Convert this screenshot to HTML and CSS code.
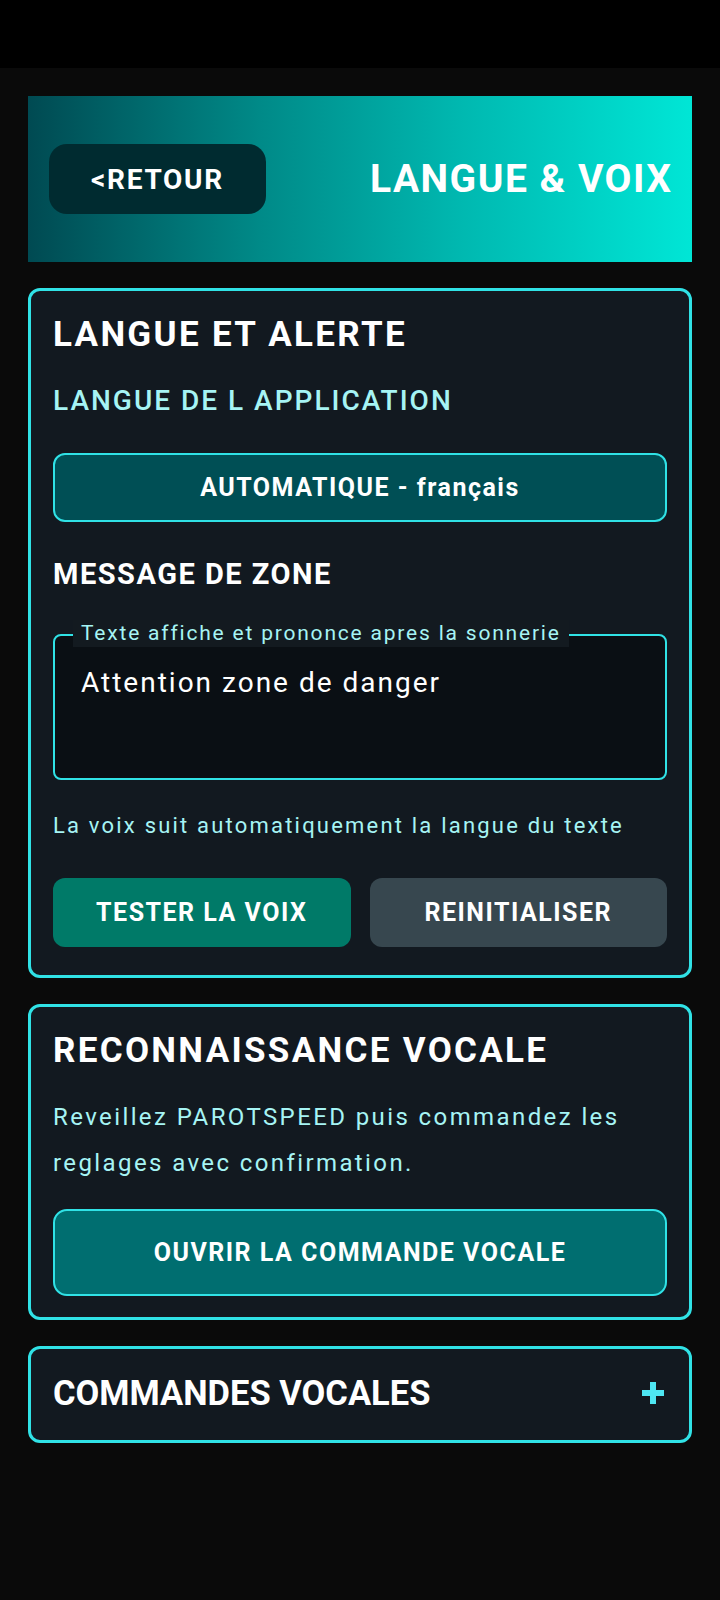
FILE: index.html
```html
<!DOCTYPE html>
<html lang="fr">
    <head>
        <meta charset="UTF-8">
        <title>Langue & Voix</title>
        <meta name="viewport" content="width=device-width, initial-scale=1.0">
        <link rel="stylesheet" href="styles.css">
    </head>
    <body>
        <div class="statusBar"></div>

        <div class="page">
            <div class="header">
                <button class="backBtn">&lt;RETOUR</button>
                <h1 class="headerTitle">LANGUE &amp; VOIX</h1>
            </div>

            <div class="card cardLang">
                <h2 class="cardTitle">LANGUE ET ALERTE</h2>
                <p class="subTitle">LANGUE DE L APPLICATION</p>
                <button class="selectBtn">AUTOMATIQUE - français</button>

                <h3 class="sectionTitle">MESSAGE DE ZONE</h3>
                <div class="field">
                    <span class="fieldLabel">Texte affiche et prononce apres la sonnerie</span>
                    <div class="fieldText">Attention zone de danger</div>
                </div>
                <p class="hint">La voix suit automatiquement la langue du texte</p>

                <div class="btnRow">
                    <button class="btn btnTest">TESTER LA VOIX</button>
                    <button class="btn btnReset">REINITIALISER</button>
                </div>
            </div>

            <div class="card cardVoice">
                <h2 class="cardTitle">RECONNAISSANCE VOCALE</h2>
                <p class="desc">Reveillez PAROTSPEED puis commandez les reglages avec confirmation.</p>
                <button class="openBtn">OUVRIR LA COMMANDE VOCALE</button>
            </div>

            <div class="card cardCmds">
                <h2 class="cardTitle cmdsTitle">COMMANDES VOCALES</h2>
                <svg class="plus" width="22" height="22" viewBox="0 0 22 22">
                    <rect x="8" y="0" width="6" height="22" fill="#4ee6f2"/>
                    <rect x="0" y="8" width="22" height="6" fill="#4ee6f2"/>
                </svg>
            </div>
        </div>
    </body>
</html>
```

FILE: styles.css
```css
body {
    margin: 0;
    padding: 0;
    background-color: #0a0a0a;
    font-family: Roboto, "Noto Sans", sans-serif;
    color: #fff;
}
button {
    font-family: inherit;
    cursor: pointer;
}
h1, h2, h3, p {
    margin: 0;
}
.statusBar {
    height: 68px;
    background-color: #000;
}
.page {
    display: flex;
    flex-direction: column;
    gap: 26px;
    padding: 28px 28px 0;
}

/* header */
.header {
    height: 166px;
    display: flex;
    align-items: center;
    justify-content: space-between;
    padding: 0 21px;
    background: linear-gradient(90deg, #004a52 0%, #008a88 35%, #00b8b0 65%, #00e6d6 100%);
}
.backBtn {
    width: 217px;
    height: 70px;
    border: none;
    border-radius: 18px;
    background-color: #002b30;
    color: #fff;
    font-size: 28px;
    font-weight: 700;
    letter-spacing: 1.7px;
}
.headerTitle {
    font-size: 39px;
    font-weight: 700;
    line-height: 44px;
    letter-spacing: 1.5px;
    margin-right: -1.5px;
}

/* cards */
.card {
    border: 3px solid #30e2e6;
    border-radius: 12px;
    background-color: #121920;
    padding: 24px 22px 28px;
}
.cardTitle {
    font-size: 35px;
    font-weight: 700;
    line-height: 40px;
    letter-spacing: 2.3px;
}
.subTitle {
    margin-top: 28px;
    color: #a6f4f4;
    font-size: 28px;
    font-weight: 500;
    line-height: 36px;
    letter-spacing: 2px;
}
.selectBtn {
    display: block;
    width: 100%;
    height: 69px;
    margin-top: 34px;
    border: 2px solid #30e2e6;
    border-radius: 12px;
    background-color: #004f55;
    color: #fff;
    font-size: 25px;
    font-weight: 700;
    letter-spacing: 1.5px;
}
.sectionTitle {
    margin-top: 33px;
    font-size: 29px;
    font-weight: 700;
    line-height: 38px;
    letter-spacing: 1.5px;
}
.field {
    position: relative;
    height: 146px;
    box-sizing: border-box;
    margin-top: 41px;
    border: 2px solid #30e2e6;
    border-radius: 8px;
    background-color: #0a0f14;
    padding: 29px 26px 0;
}
.fieldLabel {
    position: absolute;
    top: -16px;
    left: 18px;
    padding: 0 8px;
    background-color: #131a20;
    color: #a6f4f4;
    font-size: 21px;
    line-height: 27px;
    letter-spacing: 1.8px;
}
.fieldText {
    font-size: 28px;
    line-height: 36px;
    letter-spacing: 2px;
}
.hint {
    margin-top: 31px;
    color: #a6f4f4;
    font-size: 22px;
    line-height: 30px;
    letter-spacing: 2.2px;
}
.btnRow {
    display: flex;
    gap: 19px;
    margin-top: 37px;
}
.btn {
    flex: 1;
    height: 69px;
    border: none;
    border-radius: 12px;
    color: #fff;
    font-size: 25px;
    font-weight: 700;
    letter-spacing: 1.5px;
}
.btnTest {
    background-color: #007a68;
}
.btnReset {
    background-color: #37474f;
}

.cardVoice {
    padding-bottom: 21px;
}
.desc {
    margin-top: 23px;
    color: #a6f4f4;
    font-size: 24px;
    line-height: 46px;
    letter-spacing: 2.4px;
}
.openBtn {
    display: block;
    width: 100%;
    height: 87px;
    margin-top: 23px;
    border: 2px solid #30e2e6;
    border-radius: 14px;
    background-color: #006e70;
    color: #fff;
    font-size: 25px;
    font-weight: 700;
    letter-spacing: 1.5px;
}

.cardCmds {
    display: flex;
    align-items: center;
    justify-content: space-between;
    padding: 24px 25px 27px 22px;
}
.cmdsTitle {
    font-size: 34.5px;
    letter-spacing: 0;
}
```
